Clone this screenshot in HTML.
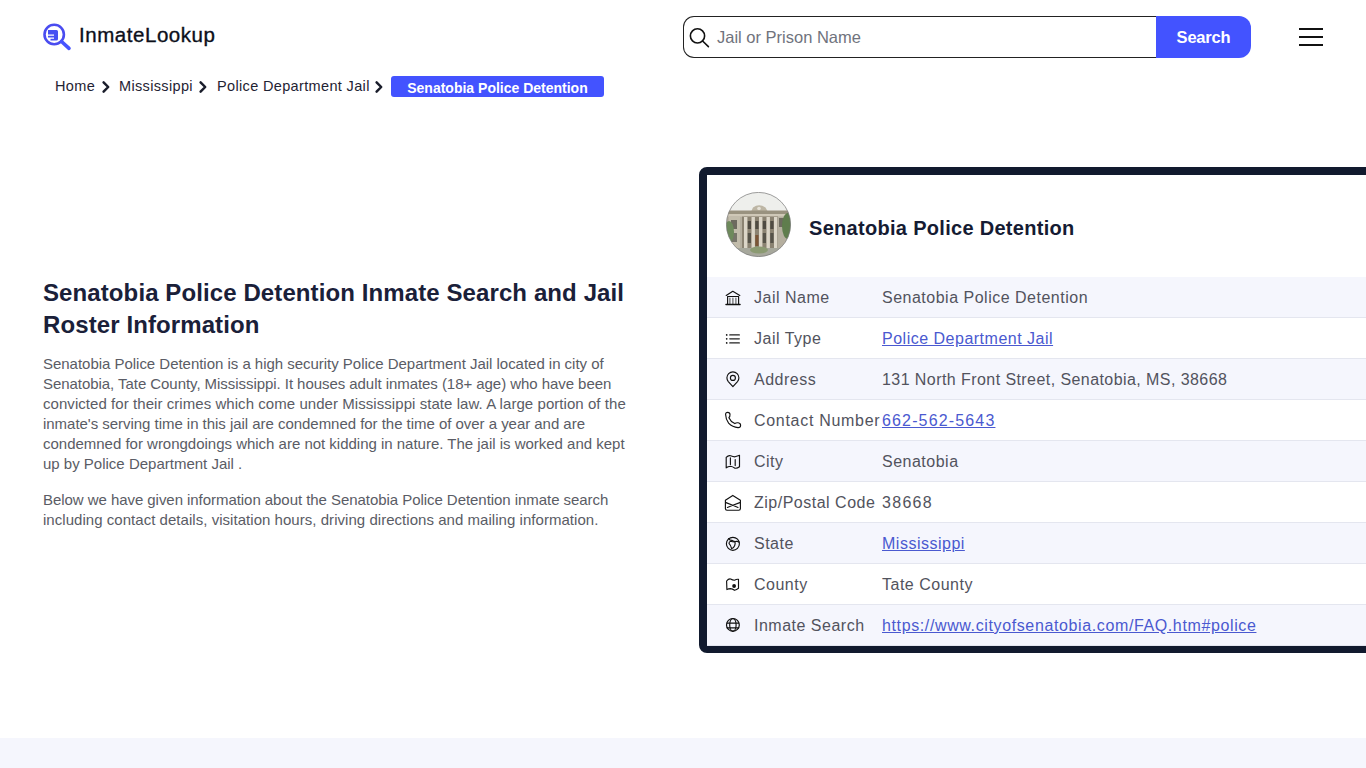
<!DOCTYPE html>
<html><head><meta charset="utf-8">
<style>
*{box-sizing:border-box;margin:0;padding:0}
html,body{width:1366px;height:768px;overflow:hidden;background:#fff}
body{font-family:"Liberation Sans",sans-serif;color:#222;position:relative}
.abs{position:absolute}
#logo-icon{left:38px;top:18px;width:40px;height:36px}
#logo-text{left:79px;top:23px;font-size:20.5px;letter-spacing:0.55px;color:#0c0f1a;-webkit-text-stroke:0.35px #0c0f1a;line-height:24px;white-space:nowrap}
#search{left:683px;top:16px;width:475px;height:42px;border:1.3px solid #222;border-right:none;border-radius:11px 0 0 11px;background:#fff}
#search-icon{left:686px;top:25px;width:26px;height:26px}
#ph{left:717px;top:27px;font-size:16.5px;color:#70737d;line-height:20px;white-space:nowrap}
#btn{left:1156px;top:16px;width:95px;height:42px;background:#4353ff;border-radius:0 12px 12px 0;color:#fff;font-weight:bold;font-size:16.5px;line-height:42px;text-align:center;letter-spacing:-0.2px}
.hb{left:1299px;width:24px;height:2px;background:#111}
.bc{top:77px;font-size:14.5px;line-height:18px;color:#1f2333;white-space:nowrap;letter-spacing:0.35px}
.chev{top:80px;width:9px;height:14px}
#badge{left:391px;top:76px;width:213px;height:21px;background:#4353ff;border-radius:3px;color:#fff;font-weight:bold;font-size:14px;line-height:24px;text-align:center}
#h1{left:43px;top:277px;width:620px;font-size:24px;font-weight:bold;line-height:32px;color:#1a2039;letter-spacing:0.1px}
.p{left:43px;width:600px;font-size:15px;line-height:20px;color:#5a5c65}
#card{left:699px;top:167px;width:720px;height:486px;border:8px solid #111a2e;border-radius:8px;background:#fff}
#card-img{left:726px;top:192px;width:65px;height:65px}
#card-title{left:809px;top:215.5px;font-size:20px;font-weight:bold;color:#151b33;line-height:24px;white-space:nowrap;letter-spacing:0.3px}
.row{left:707px;width:700px;height:41px;border-bottom:1px solid #e4e6ef}
.row.alt{background:#f5f6fd}
.ic{width:24px;height:24px}
.lab{left:754px;font-size:16px;line-height:20px;color:#52535d;white-space:nowrap;letter-spacing:0.5px}
.val{left:882px;font-size:16px;line-height:20px;color:#52535d;white-space:nowrap;letter-spacing:0.5px}
.val a{color:#4a59d0;text-decoration:underline}
#foot{left:0;top:738px;width:1366px;height:30px;background:#f5f6fd}
</style></head><body>

<svg id="logo-icon" class="abs" viewBox="0 0 40 36">
  <circle cx="16.2" cy="16.5" r="9.7" fill="none" stroke="#4a4cf0" stroke-width="2.6"/>
  <line x1="23.5" y1="23.5" x2="31" y2="30.3" stroke="#4754ff" stroke-width="3.6" stroke-linecap="round"/>
  <path d="M10 12 H18.5 Q20 12 20 13.5 V21 Q20 22.5 18.5 22.5 H12.5 V20.8 H16 V19.6 H10 V17.8 H16 V16.4 H10 Z" fill="#4650f2"/>
</svg>
<div id="logo-text" class="abs">InmateLookup</div>

<div id="search" class="abs"></div>
<svg id="search-icon" class="abs" viewBox="0 0 26 26">
  <circle cx="11.5" cy="10.9" r="7.1" fill="none" stroke="#111" stroke-width="1.6"/>
  <line x1="16.6" y1="16" x2="22.4" y2="21.6" stroke="#111" stroke-width="1.6" stroke-linecap="round"/>
</svg>
<div id="ph" class="abs">Jail or Prison Name</div>
<div id="btn" class="abs">Search</div>
<div class="abs hb" style="top:28px"></div>
<div class="abs hb" style="top:36px"></div>
<div class="abs hb" style="top:44px"></div>

<div class="abs bc" style="left:55px">Home</div>
<svg class="abs chev" style="left:101px" viewBox="0 0 9 14"><path d="M2.6 2.3 L7.2 7 L2.6 11.7" fill="none" stroke="#1a1d2b" stroke-width="2.5" stroke-linecap="round" stroke-linejoin="round"/></svg>
<div class="abs bc" style="left:119px">Mississippi</div>
<svg class="abs chev" style="left:198px" viewBox="0 0 9 14"><path d="M2.6 2.3 L7.2 7 L2.6 11.7" fill="none" stroke="#1a1d2b" stroke-width="2.5" stroke-linecap="round" stroke-linejoin="round"/></svg>
<div class="abs bc" style="left:217px">Police Department Jail</div>
<svg class="abs chev" style="left:374px" viewBox="0 0 9 14"><path d="M2.6 2.3 L7.2 7 L2.6 11.7" fill="none" stroke="#1a1d2b" stroke-width="2.5" stroke-linecap="round" stroke-linejoin="round"/></svg>
<div id="badge" class="abs">Senatobia Police Detention</div>

<div id="h1" class="abs">Senatobia Police Detention Inmate Search and Jail<br>Roster Information</div>
<div class="abs p" style="top:354px"><span style="display:block;letter-spacing:-0.025px">Senatobia Police Detention is a high security Police Department Jail located in city of</span><span style="display:block;letter-spacing:-0.053px">Senatobia, Tate County, Mississippi. It houses adult inmates (18+ age) who have been</span><span style="display:block;letter-spacing:0.057px">convicted for their crimes which come under Mississippi state law. A large portion of the</span><span style="display:block;letter-spacing:-0.034px">inmate's serving time in this jail are condemned for the time of over a year and are</span><span style="display:block;letter-spacing:-0.012px">condemned for wrongdoings which are not kidding in nature. The jail is worked and kept</span><span style="display:block;letter-spacing:0px">up by Police Department Jail .</span></div>
<div class="abs p" style="top:490px"><span style="display:block;letter-spacing:-0.052px">Below we have given information about the Senatobia Police Detention inmate search</span><span style="display:block;letter-spacing:0.039px">including contact details, visitation hours, driving directions and mailing information.</span></div>

<div id="card" class="abs"></div>
<div class="abs row alt" style="top:277px"></div>
<svg class="abs ic" style="left:721px;top:285px" width="24" height="24" viewBox="0 0 24 24"><g fill="none" stroke="#111" stroke-width="1.15" stroke-linecap="round" stroke-linejoin="round"><path d="M5.2 10.5 L11.8 6.3 L18.8 10.5"/><path d="M6.6 19.3 V11.5 H17.6 V19.3"/><path d="M8.9 13.2 V19 M11.9 13.2 V19 M14.9 13.2 V19" stroke="#666" stroke-width="1.2"/><path d="M5 19.5 H19" stroke-width="1.5"/></g></svg>
<div class="abs lab" style="top:288px">Jail Name</div>
<div class="abs val" style="top:288px">Senatobia Police Detention</div>
<div class="abs row" style="top:318px"></div>
<svg class="abs ic" style="left:721px;top:326px" width="24" height="24" viewBox="0 0 24 24"><g fill="none" stroke="#222" stroke-width="1.35" stroke-linecap="round"><path d="M8.8 8.9 H18.3 M8.8 12.8 H18.3 M8.8 16.9 H18.3"/></g><g fill="#111"><circle cx="5.7" cy="8.9" r="0.85"/><circle cx="5.7" cy="12.8" r="0.85"/><circle cx="5.7" cy="16.9" r="0.85"/></g></svg>
<div class="abs lab" style="top:329px">Jail Type</div>
<div class="abs val" style="top:329px"><a>Police Department Jail</a></div>
<div class="abs row alt" style="top:359px"></div>
<svg class="abs ic" style="left:721px;top:367px" width="24" height="24" viewBox="0 0 24 24"><g fill="none" stroke="#111" stroke-width="1.15" stroke-linecap="round" stroke-linejoin="round"><path d="M11.9 19.6 L7.3 14.6 Q5.9 13 5.9 10.8 A6 6 0 0 1 17.9 10.8 Q17.9 13 16.5 14.6 Z"/><circle cx="11.9" cy="10.9" r="2.5"/></g></svg>
<div class="abs lab" style="top:370px">Address</div>
<div class="abs val" style="top:370px;letter-spacing:0.43px">131 North Front Street, Senatobia, MS, 38668</div>
<div class="abs row" style="top:400px"></div>
<svg class="abs ic" style="left:721px;top:408px" width="24" height="24" viewBox="0 0 24 24"><g fill="none" stroke="#111" stroke-width="1.15" stroke-linecap="round" stroke-linejoin="round"><path d="M4.6 6.6 Q4.5 4.3 6.8 4.3 Q8.9 4.3 9 6.6 Q9.1 8.6 7.9 9.7 Q9.6 13.6 13.8 15.6 Q14.9 14.6 17.2 14.8 Q19.7 15.2 19.6 17.5 Q19.5 19.7 17 19.6 Q11.5 19.3 7.6 15.2 Q4.8 11.7 4.6 6.6 Z"/></g></svg>
<div class="abs lab" style="top:411px;letter-spacing:0.7px">Contact Number</div>
<div class="abs val" style="top:411px;letter-spacing:1.15px"><a>662-562-5643</a></div>
<div class="abs row alt" style="top:441px"></div>
<svg class="abs ic" style="left:721px;top:449px" width="24" height="24" viewBox="0 0 24 24"><g fill="none" stroke="#111" stroke-width="1.15" stroke-linecap="round" stroke-linejoin="round"><path d="M5.2 8.4 Q7.5 6 9.6 6.8 Q12 7.8 14 7.8 Q16.5 7 18.5 6.3 V17.8 Q16 19.6 14 19.2 Q11.5 17.4 9.5 17.2 Q7 17.5 5.2 18.8 Z"/><path d="M9.4 8.8 V15.4 M14.2 10.6 V16.6"/></g></svg>
<div class="abs lab" style="top:452px">City</div>
<div class="abs val" style="top:452px">Senatobia</div>
<div class="abs row" style="top:482px"></div>
<svg class="abs ic" style="left:721px;top:490px" width="24" height="24" viewBox="0 0 24 24"><g fill="none" stroke="#111" stroke-width="1.15" stroke-linecap="round" stroke-linejoin="round"><path d="M4.4 10.3 L11.8 5.4 L19.4 10.3 V18.6 Q19.4 20.2 17.8 20.2 H6 Q4.4 20.2 4.4 18.6 Z"/><path d="M5 12.6 L11.8 15.3 L18.8 12.6 M6.4 17.5 L11.8 15.3 L17 17.5"/></g></svg>
<div class="abs lab" style="top:493px">Zip/Postal Code</div>
<div class="abs val" style="top:493px;letter-spacing:1.3px">38668</div>
<div class="abs row alt" style="top:523px"></div>
<svg class="abs ic" style="left:721px;top:531px" width="24" height="24" viewBox="0 0 24 24"><g fill="none" stroke="#111" stroke-width="1.15" stroke-linecap="round" stroke-linejoin="round"><circle cx="11.9" cy="12.8" r="6.5"/><path d="M7.6 7.6 Q8.8 9.6 11.2 9.4 Q13.4 10.8 15.2 10.4 Q17 10.1 18.3 11.2"/><path d="M8 12.4 Q9.8 14.2 10.6 17.6 Q12.6 17.4 13.6 14.8 Q14.5 12.6 14 11 Q11.4 10.9 9.6 10.2 Q8 10.6 8 12.4 Z"/></g></svg>
<div class="abs lab" style="top:534px">State</div>
<div class="abs val" style="top:534px"><a>Mississippi</a></div>
<div class="abs row" style="top:564px"></div>
<svg class="abs ic" style="left:721px;top:572px" width="24" height="24" viewBox="0 0 24 24"><g fill="none" stroke="#111" stroke-width="1.15" stroke-linecap="round" stroke-linejoin="round"><path d="M5.6 9 Q7.5 6.6 9.6 7 Q11.5 8.2 13.5 8.2 Q15.6 7 17.5 7.3 V16.3 Q15.6 17.8 13.6 18.3 Q11.4 16.6 9.6 16.6 Q7.5 16.8 5.9 17.6 Z"/></g><circle cx="13.1" cy="14" r="1.9" fill="#111"/></svg>
<div class="abs lab" style="top:575px">County</div>
<div class="abs val" style="top:575px">Tate County</div>
<div class="abs row alt" style="top:605px"></div>
<svg class="abs ic" style="left:721px;top:613px" width="24" height="24" viewBox="0 0 24 24"><g fill="none" stroke="#111" stroke-width="1.2" stroke-linecap="round"><circle cx="11.9" cy="11.9" r="6.4"/><ellipse cx="11.9" cy="11.9" rx="3.2" ry="6.2"/><path d="M6 10.2 H17.8 M6.2 14.8 H17.6"/></g></svg>
<div class="abs lab" style="top:616px">Inmate Search</div>
<div class="abs val" style="top:616px;letter-spacing:0.62px"><a>https://www.cityofsenatobia.com/FAQ.htm#police</a></div>
<svg id="card-img" class="abs" viewBox="0 0 65 65">
<defs><clipPath id="cc"><circle cx="32.5" cy="32.5" r="32.2"/></clipPath>
<filter id="bl"><feGaussianBlur stdDeviation="0.45"/></filter></defs>
<g clip-path="url(#cc)"><g filter="url(#bl)">
<rect width="65" height="65" fill="#eeefec"/>
<rect x="0" y="20" width="65" height="45" fill="#b5af9f"/>
<path d="M27 15.5 Q33 11 39.5 15.5 L42 20 H25 Z" fill="#bdb6a5"/>
<circle cx="33" cy="16.5" r="1.8" fill="#e6e2d8"/>
<rect x="0" y="18.5" width="65" height="3.5" fill="#99927f"/>
<rect x="0" y="22" width="65" height="2.5" fill="#cfc8b7"/>
<rect x="3" y="25" width="11" height="32" fill="#c2bcab"/>
<rect x="5" y="28" width="6" height="9" fill="#6d6a5f"/>
<rect x="5" y="41" width="6" height="9" fill="#77746a"/>
<rect x="53" y="26" width="6" height="9" fill="#6d6a5f"/>
<rect x="16" y="24.5" width="36" height="34" fill="#8b8372"/>
<rect x="18" y="25" width="3.4" height="34" fill="#dcd6c8"/>
<rect x="25.5" y="25" width="3.4" height="34" fill="#dcd6c8"/>
<rect x="33" y="25" width="3.4" height="34" fill="#dcd6c8"/>
<rect x="40.5" y="25" width="3.4" height="34" fill="#dcd6c8"/>
<rect x="48" y="25" width="3.4" height="34" fill="#dcd6c8"/>
<rect x="21.8" y="29" width="3.2" height="8" fill="#4f4b42"/>
<rect x="29.3" y="29" width="3.2" height="8" fill="#4f4b42"/>
<rect x="36.8" y="29" width="3.2" height="8" fill="#4f4b42"/>
<rect x="44.3" y="29" width="3.2" height="8" fill="#4f4b42"/>
<rect x="21.8" y="41" width="3.2" height="10" fill="#57534a"/>
<rect x="29.3" y="43" width="3.2" height="11" fill="#7a5536"/>
<rect x="36.8" y="41" width="3.2" height="10" fill="#57534a"/>
<rect x="44.3" y="41" width="3.2" height="10" fill="#57534a"/>
<ellipse cx="3" cy="40" rx="5" ry="11" fill="#6e8a5c"/>
<ellipse cx="62" cy="34" rx="6" ry="13" fill="#5e7d4d"/>
<rect x="0" y="56" width="65" height="9" fill="#a7a89c"/>
<ellipse cx="33" cy="58" rx="9" ry="3.5" fill="#8b9a72"/>
</g></g>
<circle cx="32.5" cy="32.5" r="32.1" fill="none" stroke="#777" stroke-width="0.7"/>
</svg>
<div id="card-title" class="abs">Senatobia Police Detention</div>

<div id="foot" class="abs"></div>
</body></html>
